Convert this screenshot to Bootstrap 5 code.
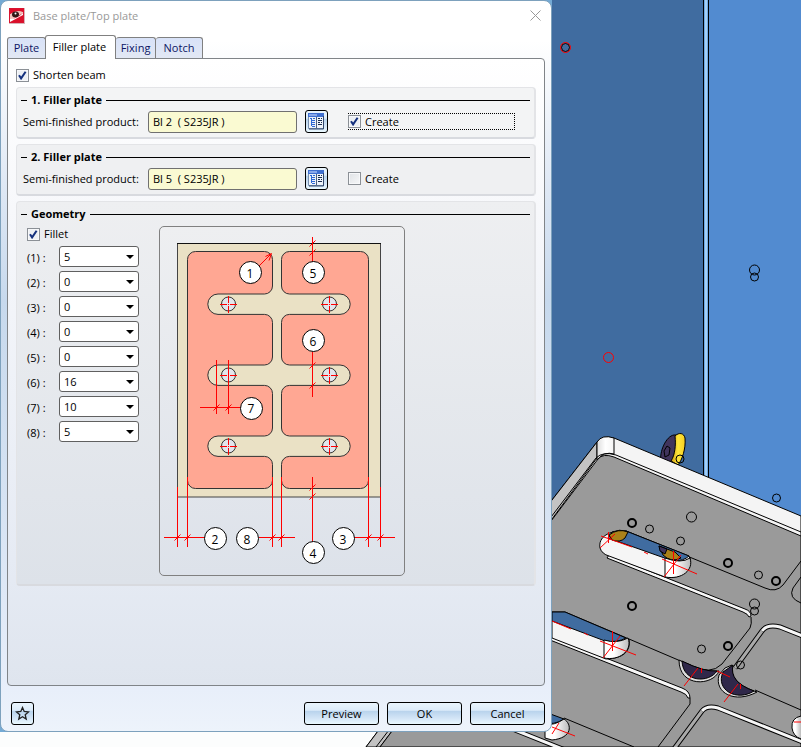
<!DOCTYPE html>
<html lang="en">
<head>
<meta charset="utf-8">
<meta name="viewport" content="width=device-width, initial-scale=1">
<title>Base plate/Top plate</title>
<link rel="stylesheet" href="https://cdn.jsdelivr.net/npm/bootstrap@5.3.0/dist/css/bootstrap.min.css">
<style>
body{font-family:"Open Sans","Noto Sans",sans-serif;font-size:11px;line-height:16px;color:#000;overflow:hidden}
.stage{background:#fcfdfd}
.scene{z-index:0;left:0;top:0}
.dialog-win{z-index:1;width:100%;max-width:552px;min-height:calc(100vh - 15px);border:1px solid #7da1bd;border-radius:8px;
 padding:0 6px 6px;background:linear-gradient(#fff 0,#fff 40px,#e0e9f5 180px,#c7d9ed 300px,#d6e3f3 500px,#e7eefa 680px,#edf3fb 100%)}
.title-row{height:34px;padding:1px 0 6px 2px;color:#999}
.close-btn{width:20px;height:20px}
.tab-item{height:21px;border:1px solid #808080;border-bottom:0;border-left:0;border-radius:3px 3px 0 0;background:linear-gradient(#d8e2f8,#e2e8f4);color:#0c1464;padding:0;text-align:center}
.tab-item:first-child{border-left:1px solid #808080}
.tab-item.active{height:24px;background:#fff;color:#000;border-left:1px solid #808080;margin-left:-1px;margin-bottom:-1px;position:relative;padding:0 2px 2px 0}
.w-a{width:39px}.w-b{width:71px}.w-c{width:40px}.w-d{width:47px}
.panel-box{border:1px solid #808488;border-radius:0 4px 4px 4px;background:linear-gradient(#fff,#f7f8fb 150px,#e6ebf4 500px,#dfe5ee);padding:8px 8px 0}
.group-box{border:1px solid #e3e4e7;border-right-width:2px;border-bottom:2px solid #d8dadf;border-radius:4px;padding:4px;margin-bottom:5px}
.g-one{background:#f3f4f5;margin-top:4px}.g-two{background:#eff0f2}
.g-geo{background:linear-gradient(#eeeff1,#dde2e9);padding-bottom:8px}
.group-head{font-weight:700;line-height:16px}
.group-head::before{content:"";width:6px;height:1px;background:#000;margin-right:4px}
.group-head::after{content:"";flex:1;height:1px;background:#000;margin-left:4px}
.prod-row{padding:2px 0 0 2px}
.check-box{appearance:none;width:13px;height:13px;margin:0;border:1px solid #8b9096;background:linear-gradient(135deg,#dfe2e6,#f6f7f8);box-shadow:inset 0 0 0 1px #f7f8fa;flex:none}
.check-box:checked{background:url("data:image/svg+xml,%3Csvg xmlns='http://www.w3.org/2000/svg' viewBox='0 0 11 11'%3E%3Cpath d='M2 5.2l2.1 3.2L8.6 1.8' fill='none' stroke='%2315317e' stroke-width='2'/%3E%3C/svg%3E") #edf0f4}
.prod-label{width:125px}
.prod-field{width:149px;height:22px;border:1px solid #707070;border-radius:3px;background:#fafad2;padding:0 4px}
.pick-btn,.act-btn{border:1px solid #000;border-radius:3px;background:linear-gradient(#eaf5fd,#dcebfa 35%,#b8d3ec 38%,#d5e6f7 75%,#eaf9ff)}
.pick-btn{width:23px;height:23px;padding:0}
.create-line{width:167px;margin-left:20px;height:17px;border:1px dotted transparent}
.create-line.focused{border-color:#000}
.create-line .check-box{margin-left:-1px}
.act-btn{height:23px;width:75px;padding:0;line-height:20px}
.geo-fields{padding:4px 20px 0 6px}
.dim-grid{display:grid;grid-template-columns:32px 80px;row-gap:4px}
.dim-grid label{padding-top:4px;line-height:16px}
.dim-select{appearance:none;height:21px;border:1px solid #606060;border-radius:3px;padding:0 4px;line-height:18px;color:#000;
 background:url("data:image/svg+xml,%3Csvg xmlns='http://www.w3.org/2000/svg' width='8' height='4'%3E%3Cpath d='M0 0h8L4 4z'/%3E%3C/svg%3E") no-repeat right 4px center #fff}
.diagram-box{width:246px;border:1px solid #808080;border-radius:5px;background:linear-gradient(#eeeff1,#dde2ea)}
</style>
<script src="https://cdn.jsdelivr.net/npm/bootstrap@5.3.0/dist/js/bootstrap.bundle.min.js"></script>
</head>
<body>
<div class="stage position-relative min-vh-100">
<svg class="scene position-absolute w-100 h-100" viewBox="0 0 801 747" preserveAspectRatio="xMinYMin slice" aria-hidden="true">
 <defs>
  <linearGradient id="endcap"><stop offset="0" stop-color="#fff"/><stop offset=".4" stop-color="#fff"/><stop offset="1" stop-color="#bbb"/></linearGradient>
  <linearGradient id="corner"><stop offset="0" stop-color="#ddd"/><stop offset=".5" stop-color="#fff"/><stop offset="1" stop-color="#f4f4f4"/></linearGradient>
  <linearGradient id="screw"><stop offset="0" stop-color="#d2a010"/><stop offset=".5" stop-color="#ffe63c"/><stop offset="1" stop-color="#f6cf20"/></linearGradient>
 </defs>
 <path d="M0 0H552V732H0z" fill="#74aad5"/>
 <path d="M552 0H703V500L552 640z" fill="#406ca0"/><path d="M703 0H709V480H703z" fill="#6ea8e4"/><path d="M705 0h2V480h-2z" fill="#a4cff5"/>
 <path d="M709 0H801V520L709 480z" fill="#528bd0"/><path d="M703.500 0V475M708.500 0V477" stroke="#000"/>
 <g stroke="#000" stroke-width="1">
  <path d="M661 462C659 452 666 436 674 435l4 0C686 440 684 456 677 464z" fill="#40345c"/>
  <path d="M675 436c4-4 9-3 10 2 1 11-3 22-7 27l-7-4c4-6 5-16 4-25z" fill="url(#screw)"/>
  <path d="M664 451l3-5 3 2-1 7-4 2z" fill="none"/><circle cx="680" cy="459" r="4" fill="none"/>
  <path d="M552 500L597 442Q602 435 614 438L801 516V747H366z" fill="#f4f4f4"/>
  <path d="M552 500L597 442V458L552 519L380 747H366z" fill="#c3c3c3"/>
  <path d="M597 442q5-8 17-4v16q-10-3-17 6z" fill="url(#corner)"/>
  <path d="M380 747L598 459Q603 453 614 457L801 536V747z" fill="#9a9a9a"/>
  <path d="M376 747L596 458Q603 451 616 455L801 532" fill="none"/>
 </g>
 <g fill="#f6f6f6" stroke="#000">
  <path d="M609 555L745 609Q751 611 751 616L749 617Q748 614 743 612L607 558z"/>
  <path d="M545 634L682 688Q690 691 690 698L688 698Q687 694 681 692L545 638z"/>
 </g>
 <g fill="none" stroke="#000" stroke-width="5">
  <path d="M665 761L702 711Q707 705 718 708L810 745"/>
  <path d="M735 668L762 631Q767 624 780 627L810 639"/><path d="M510 728L570 752"/>
 </g>
 <g fill="none" stroke="#f6f6f6" stroke-width="3">
  <path d="M702 711Q707 705 718 708L810 745"/><path d="M762 631Q767 624 780 627L810 639"/><path d="M510 728L570 752"/>
  <path d="M665 761L702 711M735 668L762 631" stroke="#aaa"/>
 </g>
 <g stroke="#000" fill="none">
  <path d="M626 531L765 588Q776 593 783 585L801 561M801 577L793 588Q788 598 801 603"/>
  <path d="M629 639L690 665Q710 676 722 664L750 628Q752 624 751 617M564 718L634 747M690 698V704L658 747M755 690L801 710"/>
  <path d="M600 548C598 537 609 530 626 531L689 556C694 568 682 580 665 577L609 556Q602 554 600 548z" fill="#f5f5f5"/>
  <path d="M612 532Q620 529 626 531L689 556Q684 561 673 561L608 538z" fill="#406ca0"/>
  <path d="M609 535Q618 528 628 532L625 538Q620 543 612 540zM659 546l16 6 6 6q-10 5-18-3z" fill="#aa8119"/>
  <path d="M659 546l8 3-2 5-5-3z" fill="#40345c"/>
  <path d="M665 558Q681 564 690 558C694 570 682 580 665 577z" fill="url(#endcap)"/>
  <path d="M552 612H565L629 639Q632 658 606 659L552 638z" fill="#f5f5f5"/>
  <path d="M552 612H565L626 638Q617 643 605 641L552 621z" fill="#406ca0"/>
  <path d="M604 640Q617 644 628 638C633 651 619 661 604 658z" fill="url(#endcap)"/>
  <path d="M545 712L564 719Q553 726 545 722z" fill="#406ca0"/>
  <path d="M545 724Q554 726 564 719C572 724 573 738 552 740L545 738z" fill="url(#endcap)"/>
  <path d="M801 716Q791 718 792 728Q793 736 801 739" fill="url(#endcap)"/>
  <path d="M679 660C679 688 713 686 719 671Q706 673 681 661z" fill="#ddd"/><path d="M682 661C683 683 709 683 717 671Q704 672 682 661z" fill="#30284a"/>
  <path d="M719 675C714 693 735 704 757 692L754 691Q729 682 732 665L725 668z" fill="#ddd"/>
  <path d="M733 665L723 672C715 690 737 702 754 691Q729 682 733 665z" fill="#30284a"/>
 </g>
 <g fill="none" stroke="#000">
  <circle cx="754.500" cy="270" r="5"/><circle cx="754.500" cy="277" r="4"/><circle cx="776.500" cy="498" r="4"/>
  <circle cx="691.500" cy="517" r="5"/><circle cx="649.500" cy="529" r="4"/><circle cx="680.500" cy="541" r="4"/><circle cx="758.500" cy="575" r="4"/>
  <circle cx="754.500" cy="604" r="5"/><circle cx="754.500" cy="611" r="4"/><circle cx="701.500" cy="649" r="4"/><circle cx="740.500" cy="665" r="4"/>
  <g stroke-width="2"><circle cx="632" cy="523" r="4"/><circle cx="728" cy="563" r="4"/><circle cx="776" cy="581" r="4"/><circle cx="632" cy="606" r="4"/><circle cx="728" cy="646" r="4"/></g>
  <circle cx="565.500" cy="47.500" r="4"/>
 </g>
 <g fill="none" stroke="#f00">
  <circle cx="565.500" cy="47.500" r="5"/><circle cx="608.500" cy="357.500" r="5"/>
  <path d="M608.500 532V543M600 548L615 534M601 536L632 547M644 552l4 2M673.500 551V574M664 577L681 555M662 559L697 574"/>
  <path d="M612.500 631V651M603 658L620 636M600 641L636 655M552 621L571 629M584 633l4 2"/>
  <path d="M684 686L698 668M701.500 668v5M724 702L738 684M740.500 684v5M717 671L730 677M552 734l7-11M552 727L575 736M801 722l-7 0"/>
 </g>
</svg>

<main class="dialog-win position-relative d-flex flex-column">
 <header class="title-row d-flex align-items-center">
  <svg width="16" height="16" viewBox="0 0 16 16" aria-hidden="true"><path d="M0 0h16v16H0z" fill="#d9b4b8"/><path d="M0 0h15v15H0z" fill="#d8142f"/><path d="M1 6Q8 1 14 4V5L1 13z" fill="#f3c3bc"/><path d="M1 1h14v3Q8 0 1 6z" fill="#e00b29"/><ellipse cx="6.500" cy="6.500" rx="3.500" ry="3" fill="#301716"/><circle cx="6.500" cy="5.500" r="1" fill="#fff"/><path d="M1 14L14 6v8z" fill="#db1029"/><path d="M1 11q7 0 13-6v2L1 14z" fill="#fff"/></svg>
  <span class="ms-1 ps-1">Base plate/Top plate</span>
  <button type="button" class="close-btn btn p-0 border-0 ms-auto d-flex align-items-center justify-content-center" aria-label="Close"><svg width="11" height="11" viewBox="0 0 11 11"><path d="M.5.5l10 10m0-10l-10 10" stroke="#999" fill="none"/></svg></button>
 </header>
 <nav class="d-flex align-items-end" role="tablist">
  <button type="button" role="tab" class="tab-item w-a">Plate</button><button type="button" role="tab" aria-selected="true" class="tab-item active w-b">Filler plate</button><button type="button" role="tab" class="tab-item w-c">Fixing</button><button type="button" role="tab" class="tab-item w-d">Notch</button>
 </nav>
 <section class="panel-box flex-grow-1">
  <div class="d-flex align-items-center"><input class="check-box" type="checkbox" id="shorten" checked><label class="ms-1" for="shorten">Shorten beam</label></div>
  <div class="group-box g-one" role="group" aria-labelledby="h1">
   <div class="group-head d-flex align-items-center" id="h1">1. Filler plate</div>
   <div class="prod-row d-flex align-items-center">
    <label class="prod-label" for="p1">Semi-finished product:</label><input class="prod-field" id="p1" value="Bl 2  ( S235JR )">
    <button type="button" class="pick-btn ms-2 d-flex align-items-center justify-content-center" aria-label="Choose product"><svg width="17" height="17" viewBox="0 0 17 17"><use href="#book"/></svg></button>
    <div class="create-line focused d-flex align-items-center"><input class="check-box" type="checkbox" id="c1" checked><label class="ms-1" for="c1">Create</label></div>
   </div>
  </div>
  <div class="group-box g-two" role="group" aria-labelledby="h2">
   <div class="group-head d-flex align-items-center" id="h2">2. Filler plate</div>
   <div class="prod-row d-flex align-items-center">
    <label class="prod-label" for="p2">Semi-finished product:</label><input class="prod-field" id="p2" value="Bl 5  ( S235JR )">
    <button type="button" class="pick-btn ms-2 d-flex align-items-center justify-content-center" aria-label="Choose product"><svg width="17" height="17" viewBox="0 0 17 17"><g id="book"><path d="M.5.500h15v15H.500z" fill="#eef3fa" stroke="#7890b0"/><path d="M0 0h16v4H0z" fill="#3f6fd0"/><path d="M1 1h8v2H1z" fill="#88a8ea"/><path d="M8.500 4v11" stroke="#4a5f80"/><path d="M15.500 3v13H1" fill="none" stroke="#33486c"/><path d="M2 5.500h2M3.500 5v8M4 7.500h3M4 9.500h3M4 11.500h3M5 5.500h2M4 13.500h3" stroke="#2f6ad6"/><path d="M10 5.500h2m1 0h1M10 7.500h4M10 9.500h2m1 0h1M10 11.500h4" stroke="#182c50"/></g></svg></button>
    <div class="create-line d-flex align-items-center"><input class="check-box" type="checkbox" id="c2"><label class="ms-1" for="c2">Create</label></div>
   </div>
  </div>
  <div class="group-box g-geo" role="group" aria-labelledby="h3">
   <div class="group-head d-flex align-items-center" id="h3">Geometry</div>
   <div class="d-flex align-items-start">
    <div class="geo-fields">
     <div class="d-flex align-items-center mb-1"><input class="check-box" type="checkbox" id="fillet" checked><label class="ms-1" for="fillet">Fillet</label></div>
     <div class="dim-grid">
      <label for="d1">(1) :</label><select class="dim-select" id="d1"><option>5</option></select>
      <label for="d2">(2) :</label><select class="dim-select" id="d2"><option>0</option></select>
      <label for="d3">(3) :</label><select class="dim-select" id="d3"><option>0</option></select>
      <label for="d4">(4) :</label><select class="dim-select" id="d4"><option>0</option></select>
      <label for="d5">(5) :</label><select class="dim-select" id="d5"><option>0</option></select>
      <label for="d6">(6) :</label><select class="dim-select" id="d6"><option>16</option></select>
      <label for="d7">(7) :</label><select class="dim-select" id="d7"><option>10</option></select>
      <label for="d8">(8) :</label><select class="dim-select" id="d8"><option>5</option></select>
     </div>
    </div>
    <div class="diagram-box mt-1">
     <svg class="d-block w-100" viewBox="160 227 244 348" role="img" aria-label="Filler plate dimensions">
      <path d="M177.500 243.500H380.500V497H177.500z" fill="#eae1c5" stroke="#444"/><path d="M177 243.500H381" stroke="#111"/>
      <g fill="#ffa793" stroke="#333">
       <path d="M195.500 251.500H264.500a8 8 0 0 1 8 8V286a8 8 0 0 1-8 8H218a10.200 10.200 0 0 0 0 20.400H264.500a8 8 0 0 1 8 8V357a8 8 0 0 1-8 8H218a10.200 10.200 0 0 0 0 20.400H264.500a8 8 0 0 1 8 8V428a8 8 0 0 1-8 8H218a10.200 10.200 0 0 0 0 20.400H264.500a8 8 0 0 1 8 8V480.500a8 8 0 0 1-8 8H195.500a8 8 0 0 1-8-8V259.500a8 8 0 0 1 8-8z"/>
       <path d="M360.500 251.500H289.500a8 8 0 0 0-8 8V286a8 8 0 0 0 8 8H340a10.200 10.200 0 0 1 0 20.400H289.500a8 8 0 0 0-8 8V357a8 8 0 0 0 8 8H340a10.200 10.200 0 0 1 0 20.400H289.500a8 8 0 0 0-8 8V428a8 8 0 0 0 8 8H340a10.200 10.200 0 0 1 0 20.400H289.500a8 8 0 0 0-8 8V480.500a8 8 0 0 0 8 8H360.500a8 8 0 0 0 8-8V259.500a8 8 0 0 0-8-8z"/>
      </g>
      <g fill="#e2e5ec" stroke="#333"><circle cx="228.500" cy="304" r="7"/><circle cx="329.500" cy="304" r="7"/><circle cx="228.500" cy="375" r="7"/><circle cx="329.500" cy="375" r="7"/><circle cx="228.500" cy="446" r="7"/><circle cx="329.500" cy="446" r="7"/></g>
      <g fill="none" stroke="#f00">
       <path d="M220 304.500h17M228.500 296v17M321 304.500h17M329.500 296v17M220 375.500h17M321 375.500h17M329.500 367v17M220 446.500h17M228.500 438v17M321 446.500h17M329.500 438v17" stroke-dasharray="7 1 1 1"/>
       <path d="M259 266l12-12M265.500 256.500l6-3-2.500 7M312.500 237V262M309.500 246.500l6-6M309.500 255.500l6-6M312.500 352V397M309.500 368.500l6-6M309.500 388.500l6-6"/>
       <path d="M216.500 360V414M228.500 360V414M200 407.500h41M213.500 410.500l6-6M225.500 410.500l6-6"/>
       <path d="M177.500 487V547M187.500 477V547M272.500 477V547M281.500 477V547M368.500 477V547M380.500 487V547M312.500 477V542M309.500 490.500l6-6M309.500 499.500l6-6"/>
       <path d="M164 537.500h41M259 537.500h36M354 537.500h41M174.500 540.500l6-6M184.500 540.500l6-6M269.500 540.500l6-6M278.500 540.500l6-6M365.500 540.500l6-6M377.500 540.500l6-6"/>
      </g>
      <g fill="#fff" stroke="#000"><circle cx="250.500" cy="272.500" r="11"/><circle cx="313.500" cy="272.500" r="11"/><circle cx="313.500" cy="340.500" r="11"/><circle cx="251.500" cy="408.500" r="11"/><circle cx="215.500" cy="538.500" r="11"/><circle cx="247.500" cy="538.500" r="11"/><circle cx="343.500" cy="538.500" r="11"/><circle cx="313.500" cy="552.500" r="11"/></g>
      <g font-size="12" text-anchor="middle"><text x="250" y="278">1</text><text x="313" y="278">5</text><text x="313" y="346">6</text><text x="251" y="413">7</text><text x="215" y="544">2</text><text x="247" y="544">8</text><text x="343" y="544">3</text><text x="313" y="558">4</text></g>
     </svg>
    </div>
   </div>
  </div>
 </section>
 <footer class="d-flex align-items-center gap-2 pt-3">
  <button type="button" class="pick-btn ms-1 me-auto d-flex align-items-center justify-content-center" aria-label="Favourites"><svg width="15" height="15" viewBox="0 0 15 15"><path d="M7.500 1.500l1.700 4 4.300.4-3.300 2.800 1 4.300-3.700-2.300L3.800 13l1-4.300L1.500 5.900l4.300-.4z" fill="none" stroke="#222" stroke-width="1.300"/></svg></button>
  <button type="button" class="act-btn">Preview</button><button type="button" class="act-btn">OK</button><button type="button" class="act-btn">Cancel</button>
 </footer>
</main>
</div>
</body>
</html>
